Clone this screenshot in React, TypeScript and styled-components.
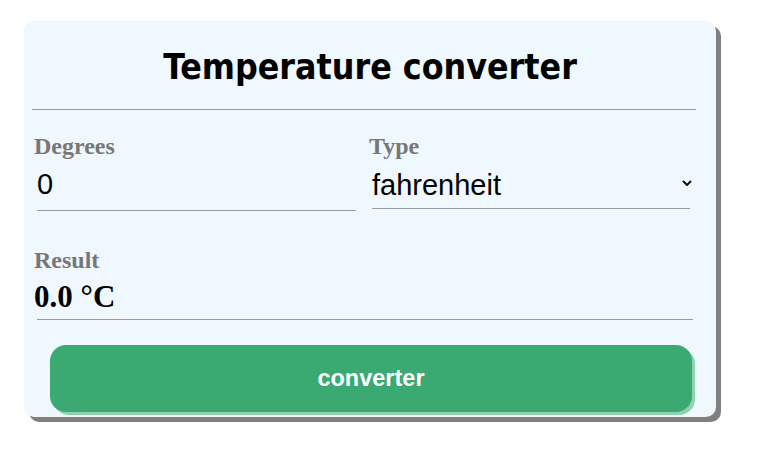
import React, { useState } from "react";
import styled, { createGlobalStyle } from "styled-components";

const Global = createGlobalStyle`
  html, body { margin: 0; padding: 0; background: #ffffff; }
  body { font-family: "Liberation Sans", Arial, sans-serif; }
  * { box-sizing: border-box; }
`;

const Page = styled.div`
  min-height: 470px;
  padding: 21px 0 30px 24px;
`;

const Card = styled.div`
  width: 692px;
  height: 396px;
  background: #eff7ff;
  border-radius: 10px;
  box-shadow: 5px 5px 0 #808080;
  display: flex;
  flex-direction: column;
`;

const Title = styled.h1`
  margin: 26px 0 0;
  height: 40px;
  line-height: 40px;
  text-align: center;
  font-family: "DejaVu Sans Condensed", "DejaVu Sans", sans-serif;
  font-stretch: condensed;
  font-weight: 700;
  font-size: 35.4px;
  color: #000;
`;

const Divider = styled.hr`
  margin: 22px 0 0 8px;
  width: 664px;
  border: none;
  border-top: 1px solid #9a9a9a;
  height: 0;
`;

const FieldRow = styled.div`
  display: grid;
  grid-template-columns: 335px 1fr;
  margin-top: 23px;
  padding-left: 10px;
`;

const Field = styled.div`
  display: flex;
  flex-direction: column;
`;

const Label = styled.label`
  font-family: "Liberation Serif", "Times New Roman", serif;
  font-weight: 700;
  font-size: 24px;
  line-height: 26px;
  color: #777777;
`;

const Input = styled.input<{ $width: number }>`
  margin: 9px 0 0 3px;
  width: ${(p) => p.$width}px;
  padding: 0 0 9px;
  border: none;
  border-bottom: 1px solid #9a9a9a;
  background: transparent;
  font-family: "Liberation Sans", Arial, sans-serif;
  font-size: 29px;
  line-height: 33px;
  color: #000;
  outline: none;
`;

const SelectWrap = styled.div`
  position: relative;
  margin: 9px 0 0 3px;
  width: 318px;
`;

const Select = styled.select`
  appearance: none;
  -webkit-appearance: none;
  display: block;
  width: 100%;
  height: 41px;
  padding: 1px 0 7px;
  border: none;
  border-radius: 0;
  border-bottom: 1px solid #9a9a9a;
  background: transparent;
  font-family: "Liberation Sans", Arial, sans-serif;
  font-size: 29px;
  line-height: 32px;
  color: #000;
  outline: none;
`;

const Chevron = styled.svg`
  position: absolute;
  right: -2px;
  top: 12px;
  width: 10px;
  height: 6px;
  pointer-events: none;
`;

const ResultBlock = styled.div`
  display: flex;
  flex-direction: column;
  margin-top: 36px;
  padding-left: 10px;
`;

const ResultValue = styled.div`
  margin-top: 7px;
  font-family: "Liberation Serif", "Times New Roman", serif;
  font-weight: 700;
  font-size: 31px;
  line-height: 34px;
  color: #000;
`;

const ResultLine = styled.div`
  margin: 5px 0 0 3px;
  width: 656px;
  border-top: 1px solid #9a9a9a;
`;

const Button = styled.button`
  margin: 25px 0 0 26px;
  width: 642px;
  height: 67px;
  border: none;
  border-radius: 16px;
  background: #3aa972;
  box-shadow: 3px 3px 0 #8fd2b0;
  color: #ffffff;
  font-family: "Liberation Sans", Arial, sans-serif;
  font-weight: 700;
  font-size: 23.5px;
  cursor: pointer;
`;

export default function App() {
  const [deg, setDeg] = useState("0");
  const [type, setType] = useState("fahrenheit");
  return (
    <>
      <Global />
      <Page>
        <Card>
          <Title>Temperature converter</Title>
          <Divider />
          <FieldRow>
            <Field>
              <Label>Degrees</Label>
              <Input $width={319} value={deg} onChange={(e) => setDeg(e.target.value)} />
            </Field>
            <Field>
              <Label>Type</Label>
              <SelectWrap>
                <Select value={type} onChange={(e) => setType(e.target.value)}>
                  <option value="fahrenheit">fahrenheit</option>
                  <option value="celsius">celsius</option>
                </Select>
                <Chevron viewBox="0 0 10 6">
                  <path d="M1 1 L5 5 L9 1" fill="none" stroke="#111" strokeWidth="2" />
                </Chevron>
              </SelectWrap>
            </Field>
          </FieldRow>
          <ResultBlock>
            <Label>Result</Label>
            <ResultValue>0.0 °C</ResultValue>
            <ResultLine />
          </ResultBlock>
          <Button>converter</Button>
        </Card>
      </Page>
    </>
  );
}
